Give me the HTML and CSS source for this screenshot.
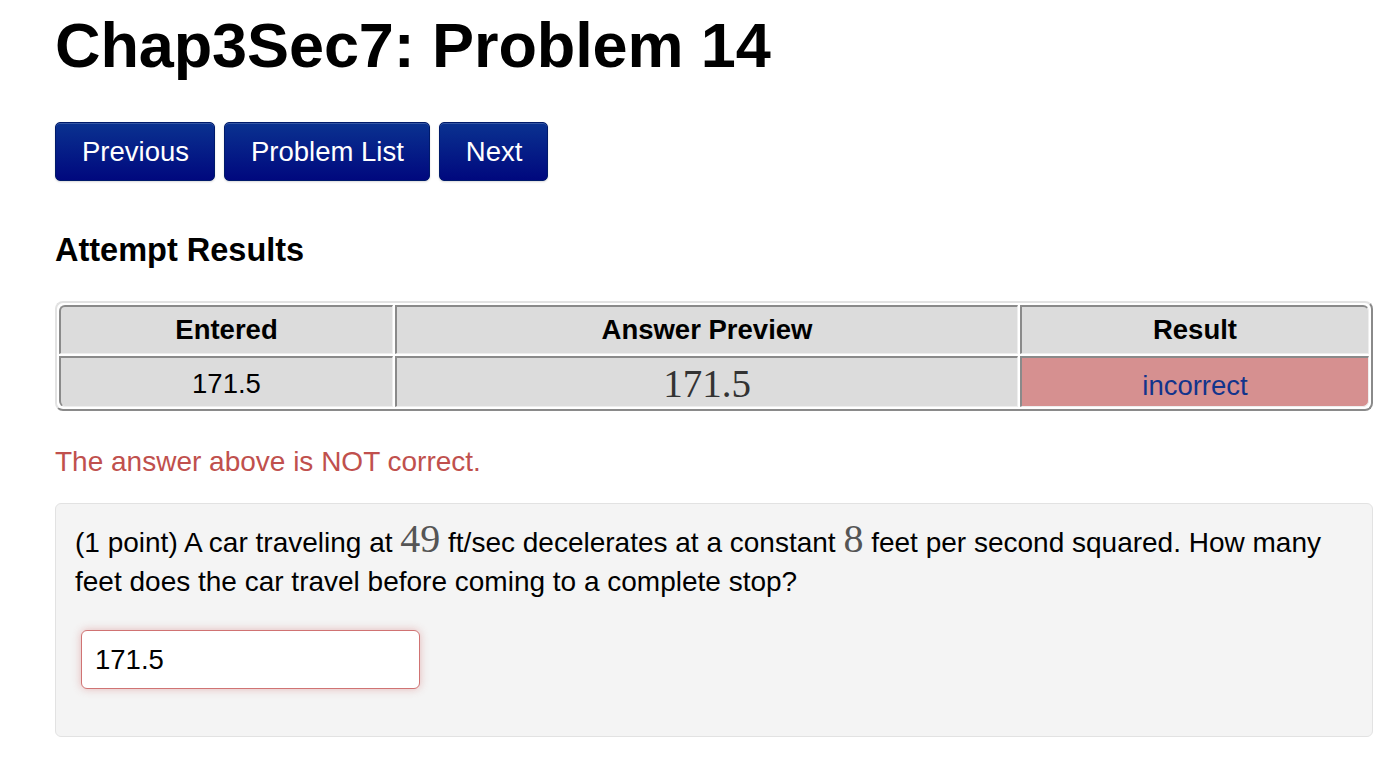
FILE: index.html
```html
<!DOCTYPE html>
<html>
<head>
<meta charset="utf-8">
<link rel="stylesheet" href="styles.css">
</head>
<body>
<div class="page">
  <h1 class="title">Chap3Sec7: Problem 14</h1>
  <div class="nav">
    <a class="btn">Previous</a>
    <a class="btn">Problem List</a>
    <a class="btn">Next</a>
  </div>
  <h2 class="section">Attempt Results</h2>
  <table class="results">
    <colgroup>
      <col class="c1"><col class="c2"><col class="c3">
    </colgroup>
    <tr>
      <th class="tl">Entered</th>
      <th>Answer Preview</th>
      <th class="tr">Result</th>
    </tr>
    <tr>
      <td class="bl">171.5</td>
      <td class="preview">171.5</td>
      <td class="bad br">incorrect</td>
    </tr>
  </table>
  <p class="error">The answer above is NOT correct.</p>
  <div class="problem">
    <p class="text">(1 point) A car traveling at <span class="math">49</span> ft/sec decelerates at a constant <span class="math">8</span> feet per second squared. How many feet does the car travel before coming to a complete stop?</p>
    <input class="answer" type="text" value="171.5">
  </div>
</div>
</body>
</html>
```
FILE: styles.css
```css
html, body {
  margin: 0;
  padding: 0;
  background: #fff;
}
body {
  font-family: "Liberation Sans", Arial, Helvetica, sans-serif;
  font-size: 28px;
  color: #000;
}
.page {
  padding: 8px 7px 0 55px;
}
.title {
  margin: 0;
  font-size: 63px;
  font-weight: bold;
  line-height: 75px;
  letter-spacing: -0.1px;
}
.nav {
  display: flex;
  gap: 9px;
  margin-top: 39px;
}
.btn {
  display: flex;
  align-items: center;
  height: 59px;
  box-sizing: border-box;
  padding: 0 25px 0 26px;
  color: #fff;
  font-size: 27.5px;
  background: linear-gradient(#0a3290, #00087e);
  border: 1px solid #001a6a;
  border-radius: 5px;
  box-shadow: inset 0 1px 0 rgba(255,255,255,0.18), 0 1px 2px rgba(0,0,0,0.15);
}
.section {
  margin: 51px 0 0;
  font-size: 32.5px;
  line-height: 36px;
  font-weight: bold;
}
.results {
  margin-top: 33px;
  width: 1318px;
  table-layout: fixed;
  border-collapse: separate;
  border-spacing: 2px;
  border: 2px solid;
  border-color: #e2e2e2 #8a8a8a #8a8a8a #e2e2e2;
  border-radius: 8px;
  background: #fff;
}
.c1 { width: 334px; }
.c2 { width: 623px; }
.c3 { width: 349px; }
.results th, .results td {
  background: #dcdcdc;
  text-align: center;
  border: 2px solid;
  border-width: 2px 1px 1px 2px;
  border-color: #8a8a8a #eeeeee #eeeeee #8a8a8a;
  line-height: 33px;
  padding: 0;
}
.results th {
  font-weight: bold;
  font-size: 27.5px;
  height: 49px;
  box-sizing: border-box;
  padding: 6px 0 7px;
}
.results td {
  font-size: 27.5px;
  height: 51px;
  box-sizing: border-box;
  padding: 8px 0 6px;
}
.results .tl { border-top-left-radius: 6px; }
.results .tr { border-top-right-radius: 6px; }
.results .bl { border-bottom-left-radius: 6px; }
.results .br { border-bottom-right-radius: 6px; }
.results td.preview {
  font-family: "Liberation Serif", "Times New Roman", serif;
  font-size: 39px;
  color: #333;
  padding: 8px 0 6px;
}
.results td.bad {
  background: #d69090;
  color: #12348c;
  padding: 10px 0 4px;
}
.error {
  margin: 34px 0 0;
  color: #c0504d;
  line-height: 34px;
}
.problem {
  margin-top: 24px;
  background: #f4f4f4;
  border: 1px solid #e2e2e2;
  border-radius: 6px;
  padding: 20px 19px 47px;
  height: 234px;
  box-sizing: border-box;
}
.text {
  margin: 0;
  line-height: 38.5px;
}
.math {
  font-family: "Liberation Serif", "Times New Roman", serif;
  font-size: 40px;
  line-height: 20px;
  color: #555;
}
.answer {
  display: block;
  margin: 29px 0 0 6px;
  width: 339px;
  height: 59px;
  box-sizing: border-box;
  padding: 0 13px;
  font-family: "Liberation Sans", Arial, sans-serif;
  font-size: 27.5px;
  color: #000;
  background: #fff;
  border: 1.5px solid #d07373;
  border-radius: 6px;
  box-shadow: 0 0 9px rgba(210, 110, 110, 0.45);
  outline: none;
}
```
